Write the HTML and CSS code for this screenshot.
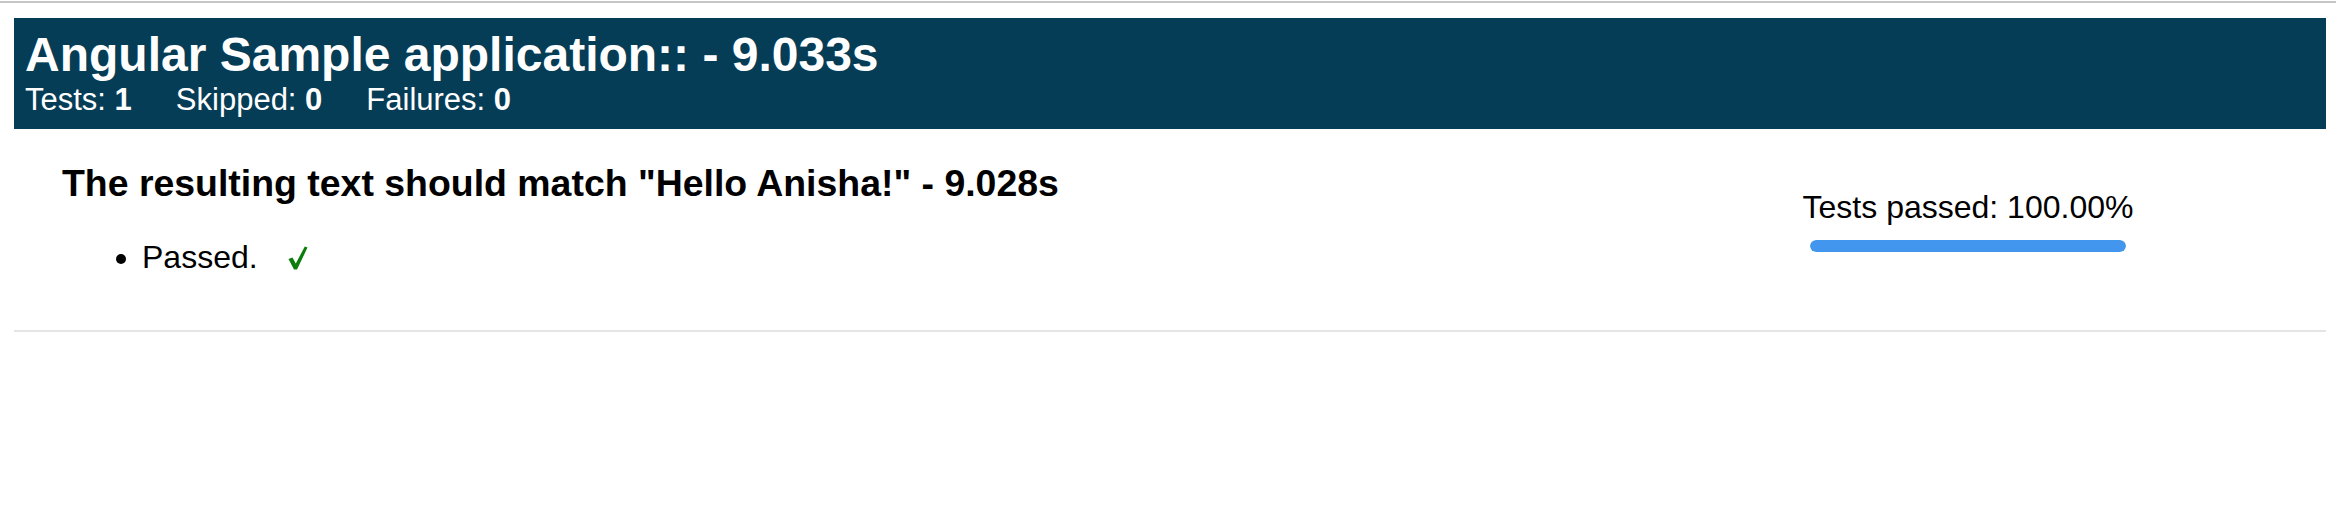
FILE: index.html
```html
<!DOCTYPE html>
<html>
<head>
<meta charset="utf-8">
<link rel="stylesheet" href="styles.css">
</head>
<body>
<div class="topline"></div>
<div class="page">
  <div class="suite-header">
    <h2 class="suite-title">Angular Sample application:: - 9.033s</h2>
    <div class="suite-stats">
      <span class="stat">Tests: <b>1</b></span>
      <span class="stat">Skipped: <b>0</b></span>
      <span class="stat">Failures: <b>0</b></span>
    </div>
  </div>
  <div class="suite-body">
    <div class="specs">
      <h3 class="spec-title">The resulting text should match "Hello Anisha!" - 9.028s</h3>
      <ul class="results">
        <li>Passed.<span class="check"><svg width="20" height="24" viewBox="0 0 20 24"><path d="M0.5 13 L4.5 11.5 L7.8 17.5 L16.8 0.5 L19.5 1.6 L9 23.5 L6 23.5 Z" fill="#0a7d0a"/></svg></span></li>
      </ul>
    </div>
    <div class="summary">
      <div class="summary-text">Tests passed: 100.00%</div>
      <div class="bar"><div class="bar-fill" style="width:100%"></div></div>
    </div>
  </div>
</div>
</body>
</html>
```
FILE: styles.css
```css
html, body {
  margin: 0;
  padding: 0;
  background: #ffffff;
}
body {
  font-family: "Liberation Sans", Arial, Helvetica, sans-serif;
  color: #000;
}
.topline {
  margin-top: 1px;
  height: 2px;
  background: #c6c6c6;
}
.page {
  padding: 0 10px 0 14px;
}
.suite-header {
  margin-top: 15px;
  background: #053c56;
  color: #fff;
  padding: 10px 0 11px 11px;
}
.suite-title {
  margin: 0;
  font-size: 48px;
  line-height: 54px;
  font-weight: bold;
}
.suite-stats {
  font-size: 31px;
  line-height: 36px;
  display: flex;
  gap: 44px;
}
.suite-body {
  display: flex;
  justify-content: space-between;
  padding: 0 0 0 48px;
  border-bottom: 2px solid #e5e5e5;
}
.spec-title {
  margin: 33px 0 0 0;
  font-size: 37.44px;
  line-height: 43px;
  font-weight: bold;
}
.results {
  margin: 34px 0 0 0;
  padding-left: 80px;
  font-size: 32px;
  line-height: 36px;
  padding-bottom: 55px;
}
.check {
  display: inline-block;
  margin-left: 30px;
  vertical-align: -2px;
}
.check svg {
  display: block;
}
.summary {
  width: 400px;
  margin-right: 158px;
  margin-top: 60px;
  display: flex;
  flex-direction: column;
  align-items: center;
}
.summary-text {
  font-size: 32px;
  line-height: 36px;
}
.bar {
  margin-top: 15px;
  width: 316px;
  height: 12px;
  border-radius: 6px;
  background: #e0e0e0;
  overflow: hidden;
}
.bar-fill {
  height: 100%;
  background: #4396ee;
  border-radius: 6px;
}
```
